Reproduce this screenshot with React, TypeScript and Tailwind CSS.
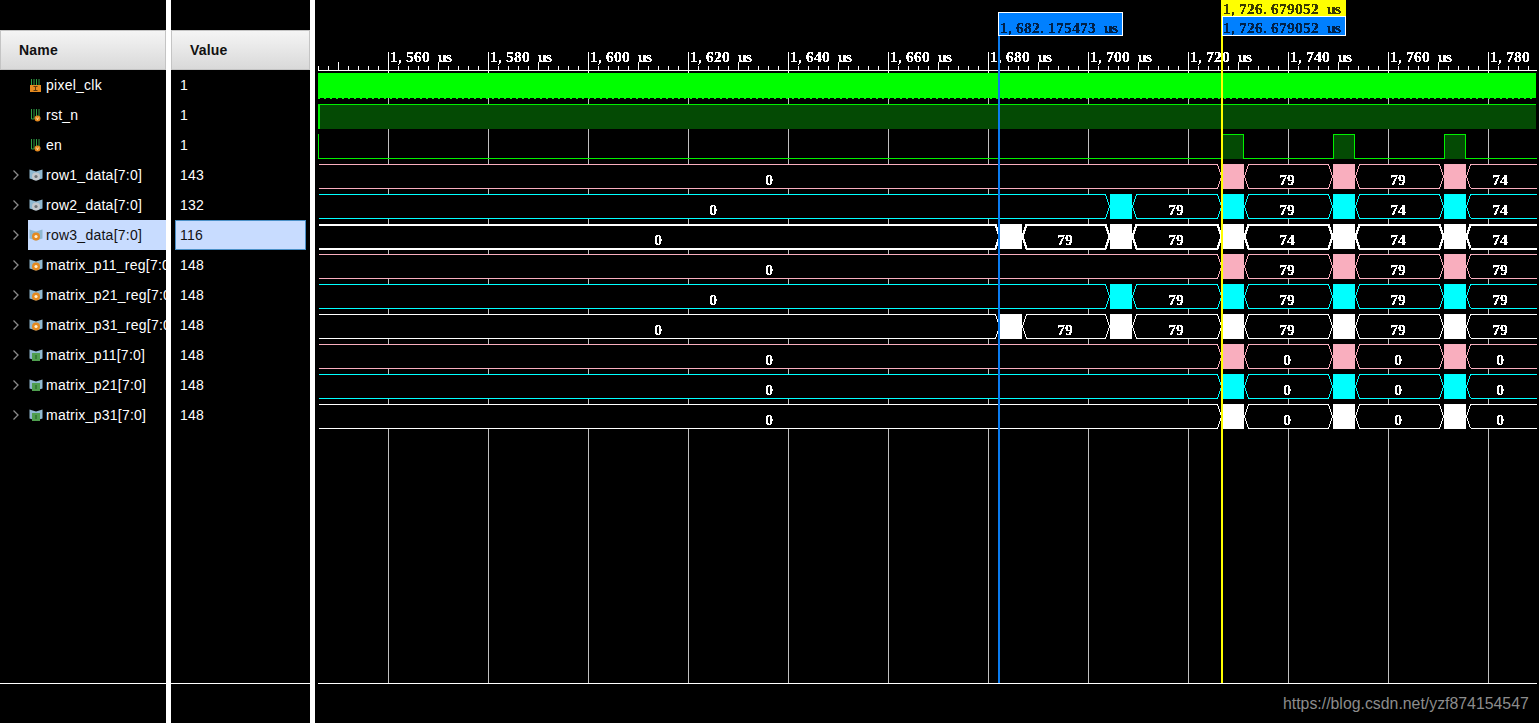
const sans = { fontFamily: '"Liberation Sans", Arial, sans-serif' };

type IconKind = "clk" | "wire" | "busGray" | "busOrange" | "busGreen";

interface Signal {
  name: string;
  value: string;
  icon: IconKind;
  expandable?: boolean;
  selected?: boolean;
}

const signals: Signal[] = [
  { name: "pixel_clk", value: "1", icon: "clk" },
  { name: "rst_n", value: "1", icon: "wire" },
  { name: "en", value: "1", icon: "wire" },
  { name: "row1_data[7:0]", value: "143", icon: "busGray", expandable: true },
  { name: "row2_data[7:0]", value: "132", icon: "busGray", expandable: true },
  { name: "row3_data[7:0]", value: "116", icon: "busOrange", expandable: true, selected: true },
  { name: "matrix_p11_reg[7:0]", value: "148", icon: "busOrange", expandable: true },
  { name: "matrix_p21_reg[7:0]", value: "148", icon: "busOrange", expandable: true },
  { name: "matrix_p31_reg[7:0]", value: "148", icon: "busOrange", expandable: true },
  { name: "matrix_p11[7:0]", value: "148", icon: "busGreen", expandable: true },
  { name: "matrix_p21[7:0]", value: "148", icon: "busGreen", expandable: true },
  { name: "matrix_p31[7:0]", value: "148", icon: "busGreen", expandable: true },
];

const PINK = "#f9aebe";
const CYAN = "#00ffff";
const WHITE = "#ffffff";
const LEFT = 318;
const RIGHT = 1537;

interface Bus {
  y: number;
  color: string;
  thick?: boolean;
  blocks: number[];
  values: string[];
}

const late = [1222, 1333, 1444];

const buses: Bus[] = [
  { y: 164, color: PINK, blocks: late, values: ["0", "79", "79", "74"] },
  { y: 194, color: CYAN, blocks: [1110, ...late], values: ["0", "79", "79", "74", "74"] },
  { y: 224, color: WHITE, thick: true, blocks: [1000, 1110, ...late], values: ["0", "79", "79", "74", "74", "74"] },
  { y: 254, color: PINK, blocks: late, values: ["0", "79", "79", "79"] },
  { y: 284, color: CYAN, blocks: [1110, ...late], values: ["0", "79", "79", "79", "79"] },
  { y: 314, color: WHITE, blocks: [1000, 1110, ...late], values: ["0", "79", "79", "79", "79", "79"] },
  { y: 344, color: PINK, blocks: late, values: ["0", "0", "0", "0"] },
  { y: 374, color: CYAN, blocks: late, values: ["0", "0", "0", "0"] },
  { y: 404, color: WHITE, blocks: late, values: ["0", "0", "0", "0"] },
];

const majors = Array.from({ length: 12 }, (_, i) => 388.5 + i * 100);
const ticks = Array.from({ length: 122 }, (_, i) => 318.5 + i * 10);

// the waveform labels sit in an 8px cell per character
const cells = (x: number, text: string) => Array.from(text, (_, i) => x + i * 8).join(" ");

function TimeLabel({ x, y, time, unit = true, fill }: { x: number; y: number; time: string; unit?: boolean; fill?: string }) {
  const full = unit ? `${time} us` : time;
  return (
    <text x={cells(x, full)} y={y} fill={fill}>
      {full}
    </text>
  );
}

function SignalIcon({ kind }: { kind: IconKind }) {
  if (kind === "clk" || kind === "wire") {
    return (
      <svg width="14" height="14" viewBox="0 0 14 14" className="shrink-0">
        <path d="M2.5 1v10h2.5V1M7.5 1v10h2.5V1" fill="none" stroke="#2f9e44" strokeWidth="1" />
        {kind === "clk" ? (
          <>
            <rect x="1" y="7" width="11" height="7" fill="#e58a1f" />
            <path d="M4.5 8.5h4M6.5 8.5v4M4.5 12.5h4" stroke="#5b3a10" strokeWidth="1" />
          </>
        ) : (
          <>
            <circle cx="8.5" cy="10.5" r="3" fill="#e58a1f" />
            <path d="M7.4 9.5l1.1 2.2 1.1-2.2" fill="none" stroke="#fff3d6" strokeWidth="0.7" />
          </>
        )}
      </svg>
    );
  }
  return (
    <svg width="14" height="12" viewBox="0 0 14 12" className="shrink-0">
      <path d="M0.5 0.5L7 2.5L13.5 0.5V9.5L7 11.5L0.5 9.5Z" fill="#8fb8d0" />
      {kind === "busGreen" ? (
        <>
          <rect x="3" y="4" width="8" height="8" fill="#4f9e4f" />
          <path d="M7 6v4" stroke="#2f6e2f" strokeWidth="1.4" />
        </>
      ) : (
        <>
          <circle cx="7" cy="7.5" r="4" fill={kind === "busGray" ? "#c4c8cc" : "#e58a1f"} />
          <circle cx="7" cy="7.5" r="1.6" fill={kind === "busGray" ? "#6f7478" : "#fff0d0"} />
        </>
      )}
    </svg>
  );
}

function Chevron() {
  return (
    <svg width="8" height="12" viewBox="0 0 8 12" className="shrink-0">
      <path d="M1.5 1.5L6 6L1.5 10.5" fill="none" stroke="#8a8a8a" strokeWidth="1.3" />
    </svg>
  );
}

function ColumnHeader({ label }: { label: string }) {
  return (
    <div className="flex h-10 items-center border border-[#c4c4c4] bg-gradient-to-b from-[#f5f5f5] to-[#d9d9d9] pl-[18px] text-sm font-bold tracking-[0.2px] text-[#111]">
      {label}
    </div>
  );
}

function NameColumn() {
  return (
    <div className="flex w-[166px] shrink-0 flex-col pt-[30px]">
      <ColumnHeader label="Name" />
      {signals.map((s) => (
        <div key={s.name} className="flex h-[30px] items-center overflow-hidden text-sm tracking-[0.25px] whitespace-nowrap">
          <span className="flex w-[28px] shrink-0 justify-end pr-[8px]">{s.expandable && <Chevron />}</span>
          <span className={`flex h-full flex-1 items-center gap-[3px] pl-px ${s.selected ? "bg-[#c8dcff] text-[#111]" : "text-white"}`}>
            <SignalIcon kind={s.icon} />
            {s.name}
          </span>
        </div>
      ))}
      <div className="mt-auto mb-[39px] h-px bg-white" />
    </div>
  );
}

function ValueColumn() {
  return (
    <div className="flex w-[139px] shrink-0 flex-col pt-[30px]">
      <ColumnHeader label="Value" />
      {signals.map((s) => (
        <div key={s.name} className="flex h-[30px] items-center text-sm tracking-[0.25px]">
          <span className={`mx-1 flex h-full flex-1 items-center ${s.selected ? "border border-[#4a90c8] bg-[#c8dcff] pl-[4px] text-[#111]" : "pl-[5px] text-white"}`}>
            {s.value}
          </span>
        </div>
      ))}
      <div className="mt-auto mb-[39px] h-px bg-white" />
    </div>
  );
}

function BusRow({ bus }: { bus: Bus }) {
  const top = bus.y + 0.5;
  const bottom = bus.y + 24.5;
  const mid = bus.y + 12.5;
  const segments: { from: number; to: number }[] = [];
  let from = LEFT;
  bus.blocks.forEach((b) => {
    segments.push({ from, to: b });
    from = b + 22;
  });
  segments.push({ from, to: RIGHT });

  return (
    <g>
      {bus.blocks.map((b) => (
        <rect key={b} x={b} y={bus.y} width={22} height={25} fill={bus.color} />
      ))}
      {segments.map((seg, i) => {
        const first = i === 0;
        const last = i === segments.length - 1;
        const a = seg.from + 0.5;
        const b = seg.to - 0.5;
        const d = [
          first ? `M${a} ${top}` : `M${a} ${mid}L${a + 4} ${top}`,
          last ? `L${b} ${top}M${a + (first ? 0 : 4)} ${bottom}L${b} ${bottom}` : `L${b - 4} ${top}L${b} ${mid}L${b - 4} ${bottom}`,
          last ? (first ? "" : `M${a + 4} ${bottom}L${a} ${mid}`) : `L${a + (first ? 0 : 4)} ${bottom}${first ? "" : `L${a} ${mid}`}`,
        ].join("");
        return (
          <g key={i}>
            <rect x={seg.from + 3} y={bus.y} width={seg.to - seg.from - 6} height={25} fill="#000" />
            <path d={d} fill="none" stroke={bus.color} strokeWidth={bus.thick ? 2 : 1} />
          </g>
        );
      })}
    </g>
  );
}

function BusLabels({ bus }: { bus: Bus }) {
  const edges = [LEFT, ...bus.blocks.flatMap((b) => [b, b + 22]), RIGHT];
  return (
    <>
      {bus.values.map((v, i) => (
        <text key={i} x={Math.floor((edges[i * 2] + edges[i * 2 + 1]) / 2) - 1} y={bus.y + 21} textAnchor="middle">
          {v}
        </text>
      ))}
    </>
  );
}

function Waveform() {
  const serif = { fontFamily: '"Liberation Serif", serif', fontSize: 15.5, fontWeight: 700 };
  return (
    <svg width="1224" height="723" viewBox="315 0 1224 723" className="block">
      <defs>
        <filter id="crisp" x="0" y="0" width="100%" height="100%">
          <feComponentTransfer>
            <feFuncA type="discrete" tableValues="0 1 1" />
          </feComponentTransfer>
        </filter>
      </defs>
      <g shapeRendering="crispEdges">
        {/* grid */}
        {majors.map((x) => (
          <line key={x} x1={x} x2={x} y1={73} y2={683} stroke="#c0c0c0" />
        ))}

        {/* ruler */}
        <line x1={LEFT} x2={RIGHT} y1={70.5} y2={70.5} stroke="#fff" />
        {ticks.map((x) => (
          <line key={x} x1={x} x2={x} y1={(x - 338.5) % 100 === 0 ? 62 : 66} y2={70} stroke="#fff" />
        ))}
        {majors.map((x) => (
          <line key={x} x1={x} x2={x} y1={52} y2={73} stroke="#fff" />
        ))}

        {/* pixel_clk */}
        <rect x={LEFT} y={73} width={1218} height={25} fill="#00ff00" />
        <line x1={LEFT} x2={1536} y1={98.5} y2={98.5} stroke="#00ff00" strokeDasharray="2 4" />

        {/* rst_n */}
        <rect x={LEFT} y={104} width={1218} height={25} fill="#044a04" />
        <line x1={LEFT} x2={1536} y1={104.5} y2={104.5} stroke="#00f000" />
        <rect x={LEFT} y={104} width={2} height={25} fill="#00f000" />

        {/* en */}
        {late.map((x) => (
          <rect key={x} x={x + 1} y={134} width={21} height={25} fill="#044a04" />
        ))}
        <path
          d={`M318.5 134V158.5H1222.5V134.5H1243.5V158.5H1333.5V134.5H1354.5V158.5H1444.5V134.5H1465.5V158.5H${RIGHT}`}
          fill="none"
          stroke="#00f000"
        />

        {buses.map((bus) => (
          <BusRow key={bus.y} bus={bus} />
        ))}

        {/* bottom rule */}
        <line x1={LEFT} x2={RIGHT} y1={683.5} y2={683.5} stroke="#fff" />
      </g>

      <g fill="#fff" style={serif} filter="url(#crisp)">
        {majors.map((x, i) => (
          <TimeLabel key={x} x={x + 1.5} y={62} time={`1,${560 + i * 20}`} unit={i < 11} />
        ))}
        {buses.map((bus) => (
          <BusLabels key={bus.y} bus={bus} />
        ))}
      </g>

      {/* cursors */}
      <g shapeRendering="crispEdges">
        <rect x={998} y={36} width={2} height={647} fill="#0a7cf0" />
        <rect x={1221} y={0} width={2} height={683} fill="#ffff00" />
        <rect x={998.5} y={12.5} width={124} height={23} fill="#0080ff" stroke="#fff" />
        <rect x={1222} y={0} width={124} height={16} fill="#ffff00" />
        <rect x={1222.5} y={16} width={123} height={19.5} fill="#0080ff" stroke="#fff" />
      </g>
      <g fill="#06204a" style={serif} filter="url(#crisp)">
        <TimeLabel x={1000} y={33} time="1,682.175473" />
        <TimeLabel x={1223} y={14} time="1,726.679052" fill="#3a3a00" />
        <TimeLabel x={1223} y={33} time="1,726.679052" />
      </g>
    </svg>
  );
}

export default function App() {
  return (
    <div className="relative flex h-[723px] w-[1539px] overflow-hidden bg-black" style={sans}>
      <NameColumn />
      <div className="w-[5px] shrink-0 bg-white" />
      <ValueColumn />
      <div className="w-[5px] shrink-0 bg-white" />
      <Waveform />
      <span className="absolute top-[694px] left-[1283px] text-[15.85px] leading-[20px] text-[#8c8c8c]">
        https://blog.csdn.net/yzf874154547
      </span>
    </div>
  );
}
